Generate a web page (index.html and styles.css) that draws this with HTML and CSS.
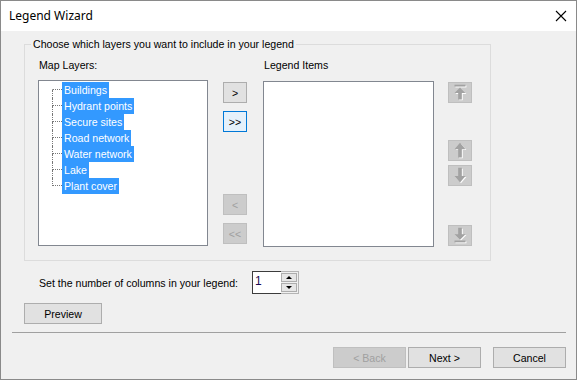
FILE: index.html
```html
<!DOCTYPE html>
<html lang="en">
<head>
    <meta charset="UTF-8">
    <title>Legend Wizard</title>
    <link rel="stylesheet" href="styles.css">
</head>
<body>
<div class="window">
    <div class="titlebar">
        <span class="title">Legend Wizard</span>
        <svg class="close" width="12" height="12" viewBox="0 0 12 12">
            <path d="M1 1L11 11M11 1L1 11" stroke="#000" stroke-width="1.1" fill="none"/>
        </svg>
    </div>

    <fieldset class="group">
        <legend>Choose which layers you want to include in your legend</legend>
        <div class="group-body">
            <div class="col list-col">
                <div class="label">Map Layers:</div>
                <div class="listbox tree">
                    <div class="node first"><span class="branch"><i class="b-top"></i><i class="b-bot"></i></span><span class="item">Buildings</span></div>
                    <div class="node"><span class="branch"><i class="b-top"></i><i class="b-bot"></i></span><span class="item">Hydrant points</span></div>
                    <div class="node"><span class="branch"><i class="b-top"></i><i class="b-bot"></i></span><span class="item">Secure sites</span></div>
                    <div class="node"><span class="branch"><i class="b-top"></i><i class="b-bot"></i></span><span class="item">Road network</span></div>
                    <div class="node"><span class="branch"><i class="b-top"></i><i class="b-bot"></i></span><span class="item">Water network</span></div>
                    <div class="node"><span class="branch"><i class="b-top"></i><i class="b-bot"></i></span><span class="item">Lake</span></div>
                    <div class="node last"><span class="branch"><i class="b-top"></i><i class="b-bot"></i></span><span class="item">Plant cover</span></div>
                </div>
            </div>

            <div class="col move-col">
                <button class="btn small">&gt;</button>
                <button class="btn small focus">&gt;&gt;</button>
                <button class="btn small off gap-big" disabled>&lt;</button>
                <button class="btn small off" disabled>&lt;&lt;</button>
            </div>

            <div class="col list-col legend-col">
                <div class="label">Legend Items</div>
                <div class="listbox"></div>
            </div>

            <div class="col order-col">
                <button class="btn small off" disabled>
                    <svg width="24" height="21" viewBox="0 0 24 21">
                        <g fill="#fff" transform="translate(1,1)"><rect x="6" y="2" width="12" height="2"/><path d="M12 5L18 11H14V18H10V11H6Z"/></g>
                        <g fill="#a2a2a2"><rect x="6" y="2" width="12" height="2"/><path d="M12 5L18 11H14V18H10V11H6Z"/></g>
                    </svg>
                </button>
                <button class="btn small off up-gap" disabled>
                    <svg width="24" height="21" viewBox="0 0 24 21">
                        <path fill="#fff" transform="translate(1,1)" d="M12 2L18 9H14V18H10V9H6Z"/>
                        <path fill="#a2a2a2" d="M12 2L18 9H14V18H10V9H6Z"/>
                    </svg>
                </button>
                <button class="btn small off down-gap" disabled>
                    <svg width="24" height="21" viewBox="0 0 24 21">
                        <path fill="#fff" transform="translate(1,1)" d="M10 2H14V11H18L12 18L6 11H10Z"/>
                        <path fill="#a2a2a2" d="M10 2H14V11H18L12 18L6 11H10Z"/>
                    </svg>
                </button>
                <button class="btn small off bottom-gap" disabled>
                    <svg width="24" height="21" viewBox="0 0 24 21">
                        <g fill="#fff" transform="translate(1,1)"><path d="M10 2H14V9H18L12 15L6 9H10Z"/><rect x="6" y="16" width="12" height="2"/></g>
                        <g fill="#a2a2a2"><path d="M10 2H14V9H18L12 15L6 9H10Z"/><rect x="6" y="16" width="12" height="2"/></g>
                    </svg>
                </button>
            </div>
        </div>
    </fieldset>

    <div class="columns-row">
        <span class="columns-label">Set the number of columns in your legend:</span>
        <div class="spin">
            <span class="spin-value">1</span>
            <span class="spin-buttons">
                <span class="spin-btn"><i class="tri-up"></i></span>
                <span class="spin-btn"><i class="tri-down"></i></span>
            </span>
        </div>
    </div>

    <div class="preview-row">
        <button class="btn preview">Preview</button>
    </div>

    <div class="separator"></div>

    <div class="footer">
        <button class="btn wide off" disabled>&lt; Back</button>
        <button class="btn wide">Next &gt;</button>
        <button class="btn wide cancel">Cancel</button>
    </div>
</div>
</body>
</html>
```

FILE: styles.css
```css
* {
    box-sizing: border-box;
}
body {
    margin: 0;
    font-family: "Liberation Sans", Arial, sans-serif;
    font-size: 10.6px;
    color: #000;
    background: #f0f0f0;
}
.window {
    width: 577px;
    height: 380px;
    border: 1px solid #8a8a8a;
    background: #f0f0f0;
    display: flex;
    flex-direction: column;
}
.titlebar {
    height: 30px;
    background: #fff;
    display: flex;
    align-items: center;
    justify-content: space-between;
    padding: 0 9px 0 8px;
    flex-shrink: 0;
}
.title {
    font-family: "Noto Sans", "Open Sans", sans-serif;
    font-size: 12px;
    padding-bottom: 1px;
}

/* group box */
.group {
    margin: 7px 0 0 23px;
    width: 467px;
    height: 223px;
    border: 1px solid #dcdcdc;
    padding: 0;
    min-width: 0;
    flex-shrink: 0;
}
.group legend {
    margin-left: 6px;
    padding: 0 2px;
    line-height: 13px;
}
.group-body {
    display: flex;
    padding: 8px 0 0 13px;
}
.col {
    display: flex;
    flex-direction: column;
}
.label {
    line-height: 13px;
    margin-bottom: 8px;
    padding-left: 1px;
}
.list-col {
    width: 170px;
}
.listbox {
    height: 166px;
    background: #fff;
    border: 1px solid #828790;
}
.legend-col {
    width: 171px;
    margin-left: 16px;
}
.legend-col .listbox {
    margin-top: 1px;
}

/* tree */
.tree {
    padding: 1px 0 0 13px;
}
.node {
    display: flex;
    height: 16px;
}
.branch {
    width: 10px;
    display: flex;
    flex-direction: column;
}
.branch i {
    display: block;
    height: 8px;
}
.b-top {
    border-left: 1px dotted #777;
    border-bottom: 1px dotted #777;
}
.b-bot {
    border-left: 1px dotted #777;
}
.first .b-top {
    border-left-color: transparent;
}
.last .b-bot {
    border-left-color: transparent;
}
.item {
    background: #3399ff;
    color: #fff;
    padding: 0 2px;
    line-height: 16px;
}

/* buttons */
.btn {
    font-family: "Liberation Sans", Arial, sans-serif;
    font-size: 10.6px;
    color: #000;
    background: #e1e1e1;
    border: 1px solid #adadad;
    padding: 0;
    height: 21px;
    display: flex;
    align-items: center;
    justify-content: center;
}
.btn.small {
    width: 24px;
}
.btn.wide {
    width: 73px;
}
.btn.preview {
    width: 78px;
}
.btn.focus {
    background: #e5f1fb;
    border-color: #0078d7;
}
.btn.off {
    background: #cccccc;
    border-color: #bfbfbf;
    color: #a0a0a0;
}
.move-col {
    margin-left: 15px;
    padding-top: 23px;
}
.move-col .btn + .btn {
    margin-top: 8px;
}
.move-col .gap-big {
    margin-top: 62px !important;
}
.order-col {
    margin-left: 14px;
    padding-top: 23px;
}
.order-col .up-gap {
    margin-top: 37px;
}
.order-col .down-gap {
    margin-top: 4px;
}
.order-col .bottom-gap {
    margin-top: 39px;
}

/* columns spinner */
.columns-row {
    display: flex;
    align-items: center;
    margin: 10px 0 0 38px;
    height: 23px;
}
.columns-label {
    width: 213px;
}
.spin {
    display: flex;
    height: 23px;
    width: 47px;
    border: 1px solid #b4b4b4;
    border-left: none;
}
.spin-value {
    flex: 1;
    background: #fff;
    border: 1px solid #3c3c3c;
    border-right: none;
    margin-top: -1px;
    margin-bottom: -1px;
    padding: 2px 0 0 2px;
    font-size: 12px;
    color: #1a0a50;
}
.spin-buttons {
    width: 17px;
    display: flex;
    flex-direction: column;
    gap: 1px;
    padding: 1px 1px 1px 0;
}
.spin-btn {
    flex: 1;
    background: #e6e6e6;
    border: 1px solid #adadad;
    display: flex;
    align-items: center;
    justify-content: center;
}
.tri-up {
    border-left: 3px solid transparent;
    border-right: 3px solid transparent;
    border-bottom: 3px solid #000;
}
.tri-down {
    border-left: 3px solid transparent;
    border-right: 3px solid transparent;
    border-top: 3px solid #000;
}

.preview-row {
    margin: 9px 0 0 23px;
}
.separator {
    margin: 8px 10px 0 11px;
    border-top: 1px solid #a0a0a0;
}
.footer {
    display: flex;
    justify-content: flex-end;
    margin: 14px 10px 0 0;
}
.footer .btn + .btn {
    margin-left: 2px;
}
.footer .cancel {
    margin-left: 12px !important;
}
```
